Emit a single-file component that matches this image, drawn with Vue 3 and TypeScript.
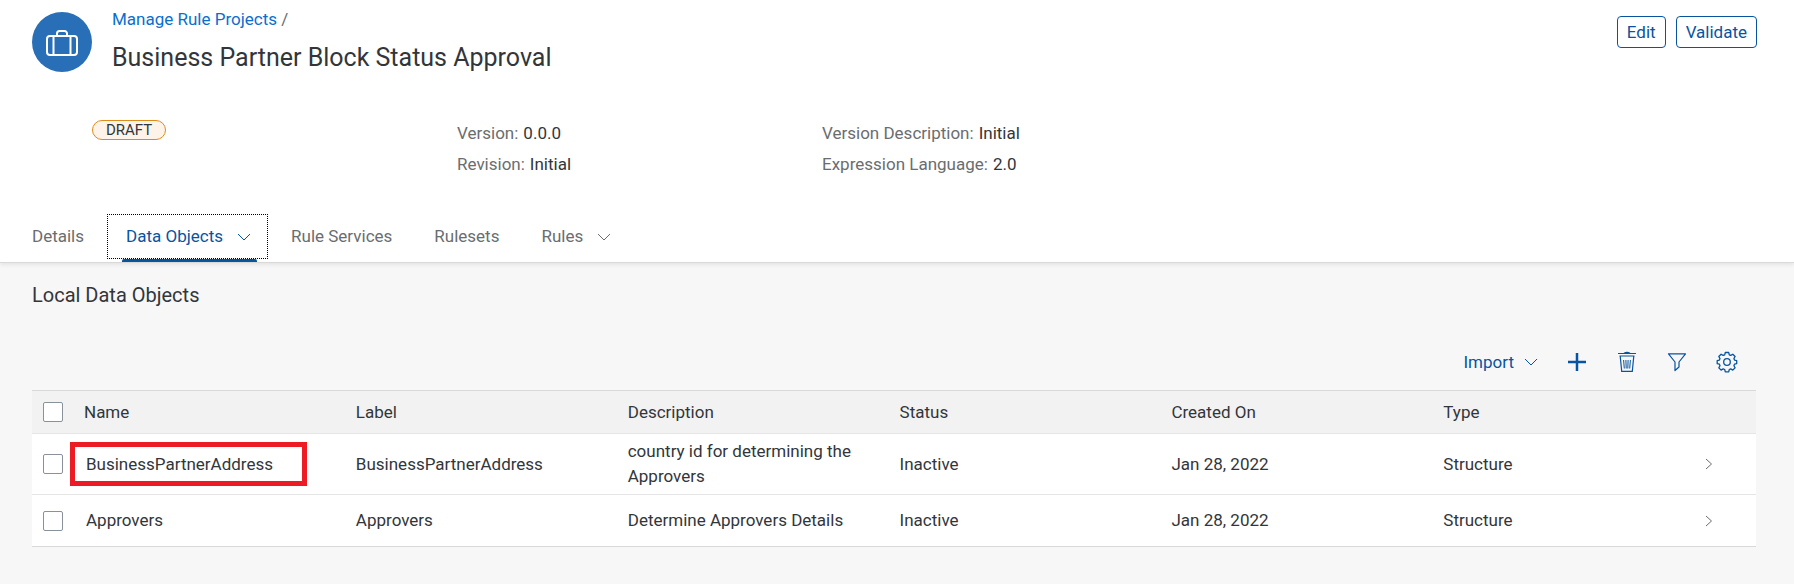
<script setup lang="ts">
import { ref } from 'vue'

interface Tab {
  label: string
  menu: boolean
}

interface DataObject {
  name: string
  label: string
  description: string
  status: string
  createdOn: string
  type: string
  marked: boolean
}

const tabs: Tab[] = [
  { label: 'Details', menu: false },
  { label: 'Data Objects', menu: true },
  { label: 'Rule Services', menu: false },
  { label: 'Rulesets', menu: false },
  { label: 'Rules', menu: true },
]
const activeTab = ref('Data Objects')

const facts = [
  [
    { term: 'Version:', value: '0.0.0' },
    { term: 'Revision:', value: 'Initial' },
  ],
  [
    { term: 'Version Description:', value: 'Initial' },
    { term: 'Expression Language:', value: '2.0' },
  ],
]

const columns = ['Name', 'Label', 'Description', 'Status', 'Created On', 'Type']

const rows: DataObject[] = [
  {
    name: 'BusinessPartnerAddress',
    label: 'BusinessPartnerAddress',
    description: 'country id for determining the Approvers',
    status: 'Inactive',
    createdOn: 'Jan 28, 2022',
    type: 'Structure',
    marked: true,
  },
  {
    name: 'Approvers',
    label: 'Approvers',
    description: 'Determine Approvers Details',
    status: 'Inactive',
    createdOn: 'Jan 28, 2022',
    type: 'Structure',
    marked: false,
  },
]

const selected = ref<string[]>([])

function toggleAll(event: Event) {
  const box = event.target as HTMLInputElement
  selected.value = box.checked ? rows.map((row) => row.name) : []
}
</script>

<template>
  <div class="page">
    <header class="head">
      <div class="title-bar">
        <span class="avatar">
          <svg width="32" height="30" viewBox="0 0 32 30" fill="none" stroke="#fff" stroke-width="2">
            <rect x="1" y="9" width="30" height="19" rx="3" />
            <path d="M11 9V6.500A2.500 2.500 0 0 1 13.500 4h5A2.500 2.500 0 0 1 21 6.500V9" />
            <path d="M7.500 9v19M24.500 9v19" />
          </svg>
        </span>
        <div class="titles">
          <nav class="crumbs"><a href="#">Manage Rule Projects</a> /</nav>
          <h1>Business Partner Block Status Approval</h1>
        </div>
        <div class="actions">
          <button type="button">Edit</button>
          <button type="button">Validate</button>
        </div>
      </div>

      <div class="facts">
        <div class="state"><span class="draft">DRAFT</span></div>
        <dl v-for="(group, i) in facts" :key="i">
          <div v-for="fact in group" :key="fact.term">
            <dt>{{ fact.term }}</dt>
            <dd>{{ fact.value }}</dd>
          </div>
        </dl>
      </div>

      <div class="tabs" role="tablist">
        <button
          v-for="tab in tabs"
          :key="tab.label"
          type="button"
          role="tab"
          class="tab"
          :class="{ active: tab.label === activeTab, 'has-menu': tab.menu }"
          :aria-selected="tab.label === activeTab"
          @click="activeTab = tab.label"
        >
          {{ tab.label }}
          <svg v-if="tab.menu" width="14" height="8" viewBox="0 0 14 8" fill="none" stroke="currentColor">
            <path d="M1 1l6 6 6-6" />
          </svg>
        </button>
      </div>
    </header>

    <main class="body">
      <h2>Local Data Objects</h2>

      <div class="toolbar">
        <button type="button" class="import">
          Import
          <svg width="14" height="8" viewBox="0 0 14 8" fill="none" stroke="currentColor">
            <path d="M1 1l6 6 6-6" />
          </svg>
        </button>
        <button type="button" class="tool" aria-label="Add">
          <svg width="22" height="22" viewBox="0 0 22 22" fill="none" stroke="currentColor" stroke-width="2.500">
            <path d="M11 2v18M2 11h18" />
          </svg>
        </button>
        <button type="button" class="tool" aria-label="Delete">
          <svg width="22" height="22" viewBox="0 0 22 22" fill="none" stroke="currentColor" stroke-width="1.200">
            <path d="M2 2.500h18M8 2.200q3-1.600 6 0M3.500 5h15M4.200 5l1.500 15.400h10.600L17.800 5" />
            <path d="M7.600 9l.7 8.500M9.900 9l.3 8.500M12.100 9l-.3 8.500M14.400 9l-.7 8.500" stroke-width="1" />
          </svg>
        </button>
        <button type="button" class="tool" aria-label="Filter">
          <svg width="22" height="22" viewBox="0 0 22 22" fill="none" stroke="currentColor" stroke-width="1.200" stroke-linejoin="round">
            <path d="M2.500 2.800h17L13 11v5l-4 3.500V11z" />
          </svg>
        </button>
        <button type="button" class="tool" aria-label="Settings">
          <svg width="22" height="22" viewBox="0 0 22 22" fill="none" stroke="currentColor" stroke-width="1.300" stroke-linejoin="round">
            <path d="M9.300 1.500h3.400l.6 2.300 1.400.6 2.100-1.200 2.300 2.300-1.200 2.100.6 1.500 2.200.5v3l-2.200.6-.6 1.500 1.200 2.100-2.300 2.300-2.100-1.200-1.400.6-.6 2.400H9.300l-.6-2.400-1.500-.6-2.100 1.200-2.300-2.300 1.200-2.100-.6-1.500-2.200-.6v-3l2.200-.5.6-1.500-1.200-2.100 2.300-2.300 2.100 1.200 1.500-.6z" />
            <circle cx="11" cy="11" r="3.300" />
          </svg>
        </button>
      </div>

      <table>
        <colgroup>
          <col class="col-select" />
          <col v-for="column in 5" :key="column" class="col-data" />
          <col />
          <col class="col-nav" />
        </colgroup>
        <thead>
          <tr>
            <th class="select">
              <input
                type="checkbox"
                aria-label="Select all"
                :checked="selected.length === rows.length"
                @change="toggleAll"
              />
            </th>
            <th v-for="column in columns" :key="column" scope="col">{{ column }}</th>
            <td></td>
          </tr>
        </thead>
        <tbody>
          <tr v-for="row in rows" :key="row.name">
            <td class="select">
              <input v-model="selected" type="checkbox" :value="row.name" :aria-label="'Select ' + row.name" />
            </td>
            <td class="name">
              <span class="name-text">{{ row.name }}<i v-if="row.marked" class="mark"></i></span>
            </td>
            <td>{{ row.label }}</td>
            <td>{{ row.description }}</td>
            <td>{{ row.status }}</td>
            <td>{{ row.createdOn }}</td>
            <td>{{ row.type }}</td>
            <td class="nav">
              <svg width="8" height="12" viewBox="0 0 8 12" fill="none" stroke="#6a6d70">
                <path d="M1 1l5.500 5L1 11" />
              </svg>
            </td>
          </tr>
        </tbody>
      </table>
    </main>
  </div>
</template>

<style>
body {
  margin: 0;
  background: #f7f7f7;
}
</style>

<style scoped>
.page {
  min-height: 100vh;
  background: #f7f7f7;
  color: #32363a;
  font: 17px/25px Roboto, "Liberation Sans", sans-serif;
}

button {
  margin: 0;
  padding: 0;
  border: 0;
  background: none;
  color: #0854a0;
  font: inherit;
  cursor: pointer;
}

svg {
  display: block;
  flex: none;
}

.head {
  position: relative;
  padding: 0 37px 0 32px;
  background: #fff;
  border-bottom: 1px solid #d9d9d9;
  box-shadow: 0 2px 4px rgba(0, 0, 0, 0.08);
}

.title-bar {
  display: flex;
  align-items: flex-start;
  gap: 20px;
  padding-top: 7px;
}

.avatar {
  display: flex;
  align-items: center;
  justify-content: center;
  width: 60px;
  height: 60px;
  margin-top: 5px;
  border-radius: 50%;
  background: #296fb7;
}

.titles {
  flex: 1;
}

.crumbs {
  color: #6a6d70;
}

.crumbs a {
  color: #0a6ed1;
  text-decoration: none;
}

h1 {
  margin: 10px 0 0;
  font-size: 25px;
  font-weight: 400;
  line-height: 32px;
}

.actions {
  display: flex;
  gap: 10px;
  padding-top: 9px;
}

.actions button {
  height: 32px;
  padding: 0 9px;
  border: 1px solid #0854a0;
  border-radius: 4px;
}

.facts {
  display: grid;
  grid-template-columns: minmax(0, 365px) minmax(0, 365px) 1fr;
  padding: 44px 0 0 60px;
}

.state {
  padding-top: 2px;
}

.draft {
  display: inline-block;
  box-sizing: border-box;
  height: 20px;
  padding: 0 13px;
  border: 1px solid #df8b1a;
  border-radius: 10px;
  background: #fef3e8;
  font-size: 15px;
  line-height: 18px;
  vertical-align: top;
}

.facts dl {
  margin: 0;
  line-height: 31px;
}

.facts dl div {
  display: flex;
  gap: 5px;
}

.facts dt {
  color: #6a6d70;
}

.facts dd {
  margin: 0;
}

.tabs {
  display: flex;
  gap: 4px;
  margin: 34px 0 0 -19px;
}

.tab {
  position: relative;
  display: flex;
  align-items: center;
  gap: 14px;
  height: 45px;
  margin-bottom: 3px;
  padding: 0 18px;
  border: 1px solid transparent;
  color: #6a6d70;
}

.tab.has-menu {
  padding-right: 16px;
}

.tab.active {
  border: 1px dotted #000;
  color: #0854a0;
}

.tab.active::after {
  content: "";
  position: absolute;
  right: 10px;
  bottom: -4px;
  left: 14px;
  height: 3px;
  border-radius: 2px 2px 0 0;
  background: #0854a0;
}

.body {
  padding: 19px 38px 24px 32px;
}

h2 {
  margin: 0;
  font-size: 20px;
  font-weight: 400;
  line-height: 26px;
}

.toolbar {
  display: flex;
  align-items: center;
  justify-content: flex-end;
  gap: 28px;
  height: 56px;
  margin-top: 26px;
  padding-right: 18px;
}

.import {
  display: flex;
  align-items: center;
  gap: 10px;
}

table {
  width: 100%;
  border-top: 1px solid #d9d9d9;
  border-spacing: 0;
  table-layout: fixed;
}

.col-select {
  width: 44px;
}

.col-data {
  width: 15.77%;
}

.col-nav {
  width: 56px;
}

th,
td {
  padding: 0 8px;
  border-bottom: 1px solid #e5e5e5;
  font-weight: 400;
  text-align: left;
}

th,
thead td {
  height: 42px;
  background: #f2f2f2;
}

tbody td {
  height: 51px;
  background: #fff;
}

tbody tr:first-child td {
  height: 60px;
}

tbody tr:last-child td {
  border-color: #d9d9d9;
}

.select {
  padding: 0 0 0 11px;
}

input {
  display: block;
  box-sizing: border-box;
  width: 20px;
  height: 20px;
  margin: 0;
  border: 1px solid #89919a;
  border-radius: 2px;
  background: #fff;
  appearance: none;
}

input:checked {
  background: #0854a0;
}

td.name {
  padding-left: 10px;
}

.name-text {
  position: relative;
}

.mark {
  position: absolute;
  top: -12px;
  right: -34px;
  bottom: -12px;
  left: -16px;
  border: 5px solid #ed1c24;
}

td.nav {
  padding-left: 5px;
}
</style>
